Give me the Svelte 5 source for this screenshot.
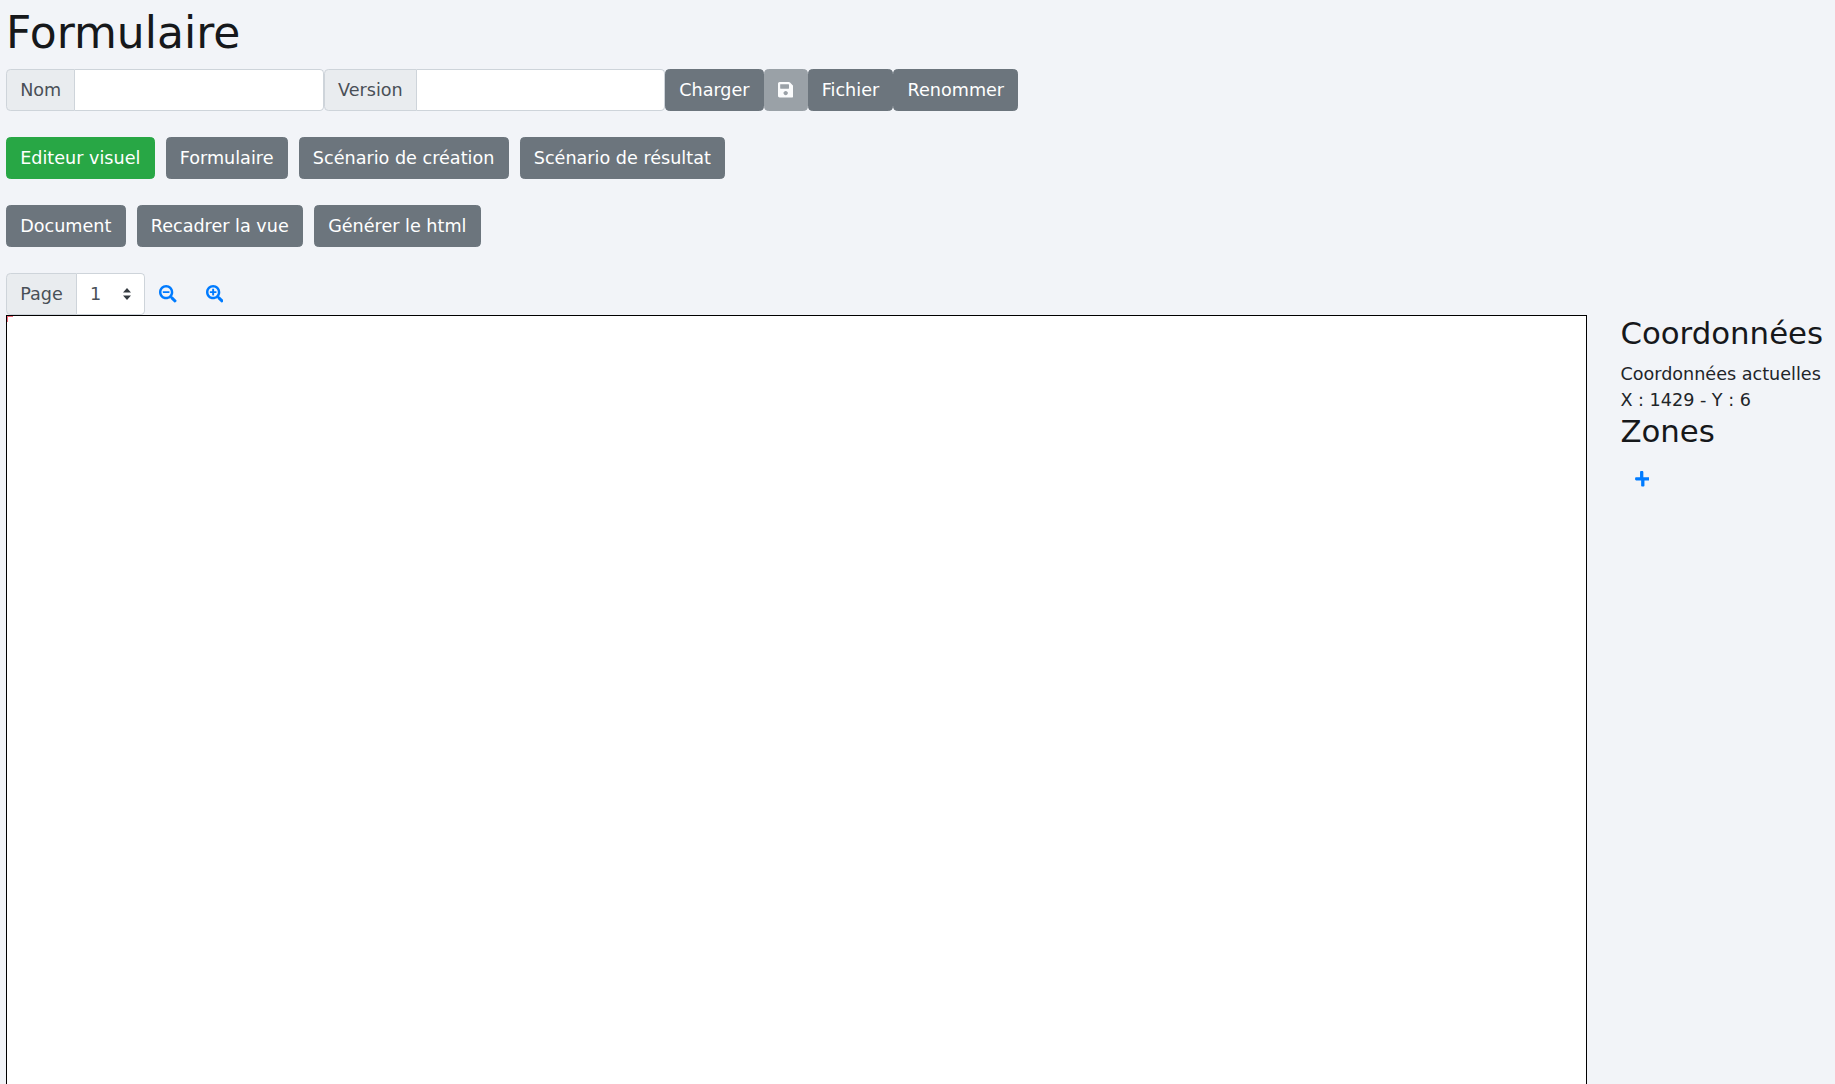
<script>
  const tabs = ['Formulaire', 'Scénario de création', 'Scénario de résultat'];
  const tools = ['Document', 'Recadrer la vue', 'Générer le html'];
  const lens = 'M505 476.7L476.7 505c-9.4 9.4-24.6 9.4-33.9 0L343 405.3c-4.5-4.5-7-10.6-7-17V372c-35.3 27.6-79.7 44-128 44C93.1 416 0 322.9 0 208S93.1 0 208 0s208 93.1 208 208c0 48.3-16.4 92.7-44 128h16.3c6.4 0 12.5 2.5 17 7l99.7 99.7c9.3 9.4 9.3 24.6 0 34zM344 208c0-75.2-60.8-136-136-136S72 132.8 72 208s60.8 136 136 136 136-60.8 136-136z';
  const minus = 'M304 192v32c0 6.6-5.4 12-12 12H124c-6.6 0-12-5.4-12-12v-32c0-6.6 5.4-12 12-12h168c6.6 0 12 5.4 12 12z';
  const plus = 'M304 192v32c0 6.6-5.4 12-12 12h-56v56c0 6.6-5.4 12-12 12h-32c-6.6 0-12-5.4-12-12v-56h-56c-6.6 0-12-5.4-12-12v-32c0-6.6 5.4-12 12-12h56v-56c0-6.6 5.4-12 12-12h32c6.6 0 12 5.4 12 12v56h56c6.6 0 12 5.4 12 12z';
</script>

<div class="page">
  <h1>Formulaire</h1>

  <div class="group top">
    <span class="addon">Nom</span>
    <input class="field" type="text" />
    <span class="addon">Version</span>
    <input class="field second" type="text" />
    <button class="btn">Charger</button>
    <button class="btn faded" aria-label="Enregistrer">
      <svg class="icon" viewBox="0 0 448 512"><path fill="currentColor" d="M433.941 129.941l-83.882-83.882A48 48 0 0 0 316.118 32H48C21.49 32 0 53.49 0 80v352c0 26.51 21.49 48 48 48h352c26.51 0 48-21.49 48-48V163.882a48 48 0 0 0-14.059-33.941zM224 416c-35.346 0-64-28.654-64-64 0-35.346 28.654-64 64-64s64 28.654 64 64c0 35.346-28.654 64-64 64zm96-304.52V212c0 6.627-5.373 12-12 12H76c-6.627 0-12-5.373-12-12V108c0-6.627 5.373-12 12-12h228.52c3.183 0 6.235 1.264 8.485 3.515l3.48 3.48A11.996 11.996 0 0 1 320 111.48z" /></svg>
    </button>
    <button class="btn">Fichier</button>
    <button class="btn">Renommer</button>
  </div>

  <div class="row">
    <button class="btn active">Editeur visuel</button>
    {#each tabs as tab}
      <button class="btn">{tab}</button>
    {/each}
  </div>

  <div class="row">
    {#each tools as tool}
      <button class="btn">{tool}</button>
    {/each}
  </div>

  <div class="group pager">
    <span class="addon">Page</span>
    <div class="select">
      <span>1</span>
      <svg class="caret" viewBox="0 0 8 12"><path fill="#343a40" d="M4 0L8 4.6H0zM4 12L0 7.4H8z" /></svg>
    </div>
    <button class="link first" aria-label="Zoom arrière">
      <svg class="zoom" viewBox="0 0 512 512"><path fill="currentColor" d={lens} /><path fill="currentColor" d={minus} /></svg>
    </button>
    <button class="link" aria-label="Zoom avant">
      <svg class="zoom" viewBox="0 0 512 512"><path fill="currentColor" d={lens} /><path fill="currentColor" d={plus} /></svg>
    </button>
  </div>

  <div class="workspace">
    <div class="canvas"><span class="origin"></span></div>
    <aside class="side">
      <h3>Coordonnées</h3>
      <div>Coordonnées actuelles</div>
      <div>X : 1429 - Y : 6</div>
      <h3 class="zones">Zones</h3>
      <button class="link add" aria-label="Ajouter une zone">
        <svg class="icon" viewBox="0 0 448 512"><path fill="currentColor" d="M416 208H272V64c0-17.67-14.33-32-32-32h-32c-17.67 0-32 14.33-32 32v144H64c-17.67 0-32 14.33-32 32v32c0 17.67 14.33 32 32 32h144v144c0 17.67 14.33 32 32 32h32c17.67 0 32-14.33 32-32V304h144c17.67 0 32-14.33 32-32v-32c0-17.67-14.33-32-32-32z" /></svg>
      </button>
    </aside>
  </div>
</div>

<style>
  :global(body) {
    margin: 0;
    height: 100vh;
    overflow: hidden;
    background: #f2f4f8;
  }

  .page {
    padding: 6.6px 6px 0;
    box-sizing: border-box;
    height: 100vh;
    overflow: hidden;
    font-family: "DejaVu Sans", sans-serif;
    font-size: 17.6px;
    line-height: 1.5;
    color: #212529;
  }

  h1 {
    margin: 0 0 9.8px;
    font-size: 44px;
    font-weight: 400;
    line-height: 1.2;
    color: #16181b;
  }

  h3 {
    margin: 0 0 8.8px;
    font-size: 30.8px;
    font-weight: 400;
    line-height: 1.2;
    color: #16181b;
  }

  .group {
    display: flex;
    align-items: stretch;
  }

  .top {
    margin-bottom: 26.4px;
  }

  .row {
    display: flex;
    gap: 11px;
    margin-bottom: 26.4px;
  }

  .addon {
    display: flex;
    align-items: center;
    padding: 6.6px 13.2px;
    background: #e9ecef;
    border: 1px solid #ced4da;
    border-radius: 4.4px 0 0 4.4px;
    color: #495057;
  }

  .field {
    box-sizing: border-box;
    width: 248.4px;
    height: 41.6px;
    padding: 6.6px 13.2px;
    background: #fff;
    border: 1px solid #ced4da;
    border-left: 0;
    border-radius: 0 4.4px 4.4px 0;
    outline: none;
  }

  .field.second {
    width: 248.1px;
  }

  .btn {
    padding: 6.6px 13.2px;
    font: inherit;
    color: #fff;
    background: #6c757d;
    border: 1px solid #6c757d;
    border-radius: 4.4px;
    cursor: pointer;
  }

  .btn.active {
    background: #28a745;
    border-color: #28a745;
  }

  .btn.faded {
    opacity: 0.65;
  }

  .icon {
    display: block;
    width: 15.4px;
    height: 17.6px;
  }

  .select {
    box-sizing: border-box;
    display: flex;
    align-items: center;
    justify-content: space-between;
    width: 68px;
    height: 41.6px;
    padding: 0 13px;
    background: #fff;
    border: 1px solid #ced4da;
    border-left: 0;
    border-radius: 0 4.4px 4.4px 0;
    color: #495057;
  }

  .caret {
    width: 8px;
    height: 12px;
  }

  .link {
    padding: 6.6px 13.2px;
    background: none;
    border: 1px solid transparent;
    color: #007bff;
    cursor: pointer;
  }

  .link.first {
    margin-right: 0.5px;
  }

  .zoom {
    display: block;
    width: 17.6px;
    height: 17.6px;
  }

  .workspace {
    display: flex;
    gap: 33.4px;
    align-items: flex-start;
  }

  .canvas {
    position: relative;
    box-sizing: border-box;
    flex: none;
    width: 1581px;
    height: 1000px;
    background: #fff;
    border: 1px solid #000;
  }

  .origin {
    position: absolute;
    top: 0;
    left: 0;
    width: 5px;
    height: 5px;
    border-top: 1px solid #f06a7a;
    border-left: 1px solid #f06a7a;
  }

  .side {
    white-space: nowrap;
  }

  .side h3:first-child {
    margin-bottom: 9.4px;
  }

  .zones {
    margin-top: -0.8px;
  }

  .add {
    margin-top: 3.8px;
    margin-left: -0.5px;
  }
</style>
